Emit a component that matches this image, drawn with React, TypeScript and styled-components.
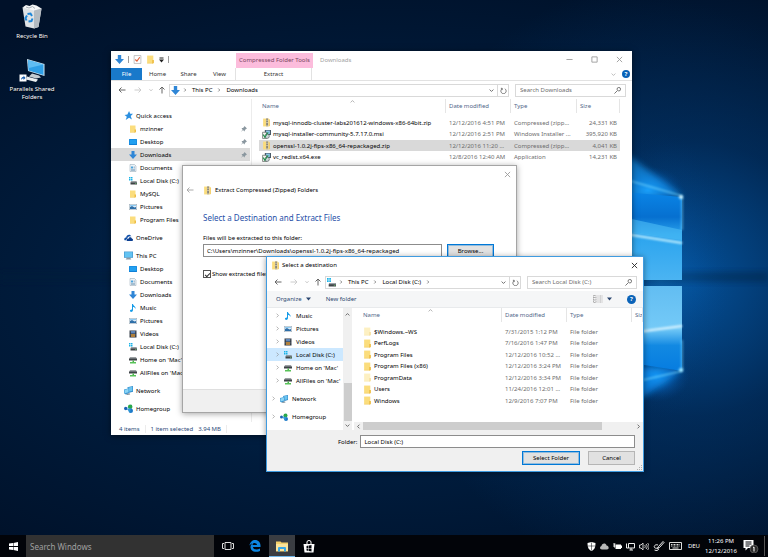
import React from 'react';
import styled, { createGlobalStyle, css } from 'styled-components';

const GlobalStyle = createGlobalStyle`
  *, *::before, *::after { box-sizing: border-box; }
  html, body { margin: 0; padding: 0; background: #00112b; }
  body, button, input, table { font-family: "Noto Sans", "Open Sans", sans-serif; font-size: 6px; line-height: 8px; color: #000; }
  button { border: 0; padding: 0; margin: 0; background: none; text-align: left; }
  svg { display: block; flex: none; }
`;

/* ---------- icons ---------- */

type IconName =
  | 'folder' | 'folderPale' | 'zip' | 'download' | 'desktop' | 'document' | 'disk' | 'picture'
  | 'music' | 'video' | 'netdrive' | 'network' | 'homegroup' | 'onedrive' | 'pc' | 'star' | 'installer' | 'check';

const folderShape = (light: string, dark: string) => (
  <>
    <path d="M2 1h11v14H2z" fill={light} />
    <path d="M11 9l3 0v5l-2 1h-1z" fill={dark} />
    <path d="M2 14h10v1H2z" fill={dark} opacity=".5" />
  </>
);

const drawings: Record<IconName, React.ReactNode> = {
  folder: folderShape('#fbdd7d', '#eebd45'),
  folderPale: folderShape('#fdf0c2', '#f7e0a0'),
  zip: (
    <>
      <path d="M2 1h10v14H2z" fill="#fbdd7d" />
      <path d="M12 1l2 2v11l-2 1z" fill="#f3cb5c" />
      <path d="M7 1h4v14H7z" fill="#c4bea8" />
      <path d="M8 1h2v2H8zM8 5h2v2H8zM8 9h2v4H8z" fill="#6a6860" />
    </>
  ),
  download: <path d="M5 0h6v7h5l-8 9-8-9h5z" fill="#2f86d6" />,
  desktop: (
    <>
      <rect x="0" y="2" width="16" height="12" rx="1" fill="#0f7fd6" />
      <rect x="1" y="3" width="14" height="9" fill="#22a0f0" />
    </>
  ),
  document: (
    <>
      <path d="M2 1h9l3 3v11H2z" fill="#eef4f8" stroke="#8fa2b0" />
      <path d="M4 5h4v4H4z" fill="#4aa3dc" />
      <path d="M9 6h3M9 8h3M4 11h8M4 13h8" stroke="#5b87a8" />
    </>
  ),
  disk: (
    <>
      <path d="M0 0h3v3H0zM4 0h3v3H4zM0 4h3v3H0zM4 4h3v3H4z" fill="#19b3e8" />
      <path d="M4 9h11l1 3v3H3v-3z" fill="#3e4347" />
      <path d="M4 9h11l1 2H3z" fill="#9aa1a6" />
      <path d="M12 13h3" stroke="#7ef07e" />
    </>
  ),
  picture: (
    <>
      <rect x="0.500" y="2.500" width="15" height="11" fill="#dfeefa" stroke="#9aa7b2" />
      <path d="M2 8l4-2 5 3 3-1v4H2z" fill="#2e6fa8" />
      <path d="M2 4h12v2H2z" fill="#8ecbf2" />
    </>
  ),
  music: <path d="M6 0h2c0 4 6 4 5 10-1-3-3-4-5-4v6c0 5-7 5-6 1 .5-2 3-2 4-2z" fill="#149be8" />,
  video: (
    <>
      <rect x="1" y="1" width="14" height="14" fill="#2d3540" />
      <path d="M4 2h8v5H4z" fill="#5f86b8" />
      <path d="M4 8h8v6H4z" fill="#b0803c" />
      <path d="M2 2v12M14 2v12" stroke="#c9d0d8" strokeDasharray="1.500 1.500" />
    </>
  ),
  netdrive: (
    <>
      <path d="M2 3h12l2 3v3H0V6z" fill="#3e4347" />
      <path d="M2 3h12l1 2H1z" fill="#9aa1a6" />
      <path d="M7 9h3v4H7z" fill="#46b848" />
      <path d="M2 12h12v3H2z" fill="#58c258" />
    </>
  ),
  network: (
    <>
      <path d="M6 2l10-2v10l-7 2z" fill="#2a86c8" />
      <path d="M7 3l8-2v8l-6 1z" fill="#6cc4f0" />
      <path d="M0 6l9-2v9l-6 2-3-2z" fill="#3b97d3" />
      <path d="M1 7l7-2v6l-7 2z" fill="#8ad4f5" />
      <path d="M4 14l6-1 1 2-6 1z" fill="#7d8c97" />
    </>
  ),
  homegroup: (
    <>
      <circle cx="3" cy="8" r="3" fill="#1c62b5" />
      <path d="M5 7l9-6v7z" fill="#5ab4e8" />
      <circle cx="11" cy="5" r="4" fill="#2aa84a" />
      <circle cx="12" cy="12" r="4" fill="#1c78c8" />
      <path d="M5 9l6 6 1-8z" fill="#2f9ad6" />
    </>
  ),
  onedrive: (
    <>
      <path d="M1 13c-2-4 2-5 3-5 0-5 7-7 9-2-5-1-7 2-7 4-2 0-2 2-2 3z" fill="#1150a8" />
      <path d="M5 14c-1-3 1-4 3-4 1-4 6-3 6 0 3 0 2 4 1 4z" fill="#0c3f91" />
    </>
  ),
  pc: (
    <>
      <rect x="0" y="1" width="16" height="11" fill="#3d8fc9" />
      <rect x="1" y="2" width="14" height="9" fill="#63c3f2" />
      <path d="M5 12h6l2 3H3z" fill="#8d9aa5" />
    </>
  ),
  star: <path d="M9 0l2 5 5 0-4 4 2 6-5-3-6 4 2-6-4-3 5-1z" fill="#2a8fe0" />,
  installer: (
    <>
      <path d="M5 0h11v9H5z" fill="#4a5a68" />
      <path d="M7 1h7v6H7z" fill="#8cc7ea" />
      <path d="M1 4h7v11H1z" fill="#f2f2ef" stroke="#39473f" />
      <circle cx="9" cy="11" r="4" fill="#cfd8dc" stroke="#3a4a45" />
      <path d="M2 8l3 5 6-9" fill="none" stroke="#1f8f4a" strokeWidth="2" />
    </>
  ),
  check: (
    <>
      <path d="M2 1h12v14H2z" fill="#fff" stroke="#9b9b9b" />
      <path d="M4 8l3 3 5-7" fill="none" stroke="#e0603a" strokeWidth="2" />
    </>
  ),
};

const Icon = ({ name, size = 9 }: { name: IconName; size?: number }) => (
  <svg width={size} height={size} viewBox="0 0 16 16" aria-hidden="true">{drawings[name]}</svg>
);

const glyphs = {
  left: 'M15 8H2M7 3L2 8l5 5',
  right: 'M1 8h13M9 3l5 5-5 5',
  up: 'M8 15V2M3 7l5-5 5 5',
  chevronRight: 'M5 2l6 6-6 6',
  chevronLeft: 'M11 2L5 8l6 6',
  chevronDown: 'M2 5l6 6 6-6',
  chevronUp: 'M2 11l6-6 6 6',
  close: 'M2 2l12 12M14 2L2 14',
  minimize: 'M1 8h14',
  maximize: 'M2 2h12v12H2z',
  refresh: 'M5 3H2M5 3v4M5 4a6 6 0 1 0 6 0',
  search: 'M1 15l6-6M7 5a4 4 0 1 1 8 0a4 4 0 1 1-8 0',
};

const Glyph = ({ name, size = 7, color = '#666', weight = 2 }: { name: keyof typeof glyphs; size?: number; color?: string; weight?: number }) => (
  <svg width={size} height={size} viewBox="0 0 16 16" fill="none" stroke={color} strokeWidth={weight} aria-hidden="true">
    <path d={glyphs[name]} />
  </svg>
);

const Triangle = ({ color = '#333' }: { color?: string }) => (
  <svg width="5" height="4" viewBox="0 0 10 8" aria-hidden="true"><path d="M0 1h10L5 7z" fill={color} /></svg>
);

const Customize = () => (
  <svg width="5" height="6" viewBox="0 0 10 12" aria-hidden="true"><path d="M1 1h8v2H1zM0 5h10l-5 6z" fill="#222" /></svg>
);

const Pin = () => (
  <svg width="6" height="6" viewBox="0 0 12 12" aria-hidden="true">
    <path d="M7 0l5 5-2 1-2 2-1 3-3-3-4 4 3-5-2-3 3 0 2-2z" fill="#8a979f" />
  </svg>
);

/* ---------- desktop ---------- */

const Desktop = styled.main`
  position: relative;
  display: flex;
  flex-direction: column;
  min-height: 100vh;
  overflow: hidden;
  isolation: isolate;
  background:
    radial-gradient(ellipse 40% 55% at 90% 50%, #044f96 0%, rgba(3, 60, 120, 0.500) 45%, rgba(0, 30, 70, 0) 100%),
    radial-gradient(ellipse 80% 60% at 50% 52%, #022f60 0%, rgba(0, 32, 68, 0.700) 55%, rgba(0, 17, 43, 0) 100%),
    #001129;
`;

const WallpaperArt = styled.svg`
  position: absolute;
  inset: 0;
  width: 100%;
  height: 100%;
  z-index: -1;
`;

const Wallpaper = () => (
  <WallpaperArt viewBox="0 0 768 557" preserveAspectRatio="xMidYMid slice" aria-hidden="true">
    <defs>
      <linearGradient id="upper" x1="0" y1="0" x2="0" y2="1">
        <stop offset="0" stopColor="#0a86e8" />
        <stop offset="0.300" stopColor="#0670d0" />
        <stop offset="0.500" stopColor="#2ba4ee" />
        <stop offset="1" stopColor="#4bb4f2" />
      </linearGradient>
      <linearGradient id="lower" x1="0" y1="0" x2="0" y2="1">
        <stop offset="0" stopColor="#62bdf2" />
        <stop offset="0.500" stopColor="#74caf7" />
        <stop offset="0.700" stopColor="#1289e2" />
        <stop offset="1" stopColor="#067ce0" />
      </linearGradient>
      <radialGradient id="halo">
        <stop offset="0" stopColor="#22a8ff" stopOpacity="0.900" />
        <stop offset="0.500" stopColor="#0a6fd0" stopOpacity="0.450" />
        <stop offset="1" stopColor="#04458c" stopOpacity="0" />
      </radialGradient>
      <filter id="soft" x="-50%" y="-50%" width="200%" height="200%"><feGaussianBlur stdDeviation="3" /></filter>
      <filter id="fine" x="-50%" y="-50%" width="200%" height="200%"><feGaussianBlur stdDeviation="1" /></filter>
    </defs>
    <path d="M0 272h768v10H0z" fill="#001a3a" opacity=".4" filter="url(#soft)" />
    <ellipse cx="660" cy="275" rx="70" ry="145" fill="url(#halo)" opacity=".25" />
    <ellipse cx="648" cy="190" rx="36" ry="24" fill="url(#halo)" />
    <ellipse cx="656" cy="376" rx="34" ry="26" fill="url(#halo)" />
    <path d="M600 135L683 196 600 200z" fill="#18a0ff" opacity=".6" filter="url(#soft)" />
    <path d="M600 425L683 370 600 366z" fill="#0f90f5" opacity=".65" filter="url(#soft)" />
    <path d="M600 190L682 197V280H600z" fill="url(#upper)" />
    <path d="M600 286H682V371L600 358z" fill="url(#lower)" />
    <path d="M600 212L682 230V240L600 228z" fill="#4cbcf5" opacity=".6" />
    <path d="M600 230L682 243" stroke="#c8f2ff" strokeWidth="2" filter="url(#fine)" />
    <path d="M600 337L682 326" stroke="#e0f6ff" strokeWidth="2" filter="url(#fine)" />
    <path d="M600 172L682 196M600 390L682 371M682 196V230M682 340V371" stroke="#7ddcff" strokeWidth="1" filter="url(#fine)" />
    <circle cx="681" cy="197" r="2" fill="#d8f7ff" filter="url(#fine)" />
    <circle cx="681" cy="370" r="2" fill="#a8ebff" filter="url(#fine)" />
  </WallpaperArt>
);

const Shortcuts = styled.nav`
  display: flex;
  flex-direction: column;
  gap: 19px;
  width: 64px;
  padding-top: 4px;
  flex: 1;
`;

const Shortcut = styled.button`
  display: flex;
  flex-direction: column;
  align-items: center;
  gap: 3px;
  color: #fff;
  text-align: center;
  text-shadow: 0 1px 1px #000;
`;

const RecycleBin = () => (
  <svg width="22" height="25" viewBox="0 0 44 50" aria-hidden="true">
    <path d="M3 7L41 9 35 46 26 49 9 45z" fill="#dfe3e6" />
    <path d="M26 11L41 9 35 46 26 49z" fill="#b4bbc1" />
    <path d="M3 7l7-5 7 2 6-3 8 2 10 6-15 4z" fill="#f6f7f8" />
    <path d="M10 6l6 2 7-3 5 4" fill="none" stroke="#aab2b8" strokeWidth="2" />
    <path d="M13 20l6-1 3 5M23 29l-2 5-6 1M11 33l-2-5 3-5" fill="none" stroke="#1c86d8" strokeWidth="4" />
  </svg>
);

const SharedFolders = () => (
  <svg width="27" height="23" viewBox="0 0 54 46" aria-hidden="true">
    <path d="M16 0L51 10V34L18 24z" fill="#d3e9f6" />
    <path d="M18 2L49 11V32L19 23z" fill="#2f9fe6" />
    <path d="M18 2L49 11 20 18z" fill="#5fbdf3" />
    <path d="M26 29l14 4 4 4-10 2-14-4z" fill="#c4ccd2" />
    <path d="M16 35l22 6-4 5-20-5z" fill="#eceff1" />
    <path d="M1 31h14v14H1z" fill="#fff" />
    <path d="M4 42c0-5 3-6 5-6v-3l4 5-4 4v-3c-2 0-3 0-5 3z" fill="#1a5fb0" />
  </svg>
);

/* ---------- windows ---------- */

const WindowFrame = styled.section`
  position: absolute;
  display: flex;
  flex-direction: column;
  background: #fff;
  overflow: hidden;
`;

const ExplorerFrame = styled(WindowFrame)`
  inset: 51px 136px 122px 111px;
  box-shadow: 0 1px 6px rgba(0, 0, 0, 0.500);
`;

const WizardFrame = styled(WindowFrame)`
  inset: 165px 251px 144px 182px;
  border: 1px solid #a5a5a5;
  box-shadow: 0 1px 6px rgba(0, 0, 0, 0.350);
`;

const PickerFrame = styled(WindowFrame)`
  inset: 256px 124px 85px 266px;
  border: 1px solid #3f9be0;
  box-shadow: 0 1px 6px rgba(0, 0, 0, 0.400);
`;

const TitleRow = styled.header`
  display: flex;
  align-items: center;
  height: 17px;
`;

const QuickTools = styled.div`
  display: flex;
  align-items: center;
  gap: 4px;
  width: 125px;
  padding-left: 4px;
`;

const ToolDivider = styled.i`
  width: 1px;
  height: 7px;
  background: #9a9a9a;
`;

const ContextTab = styled.div`
  align-self: flex-end;
  width: 77px;
  height: 15px;
  line-height: 15px;
  background: #fcbcdc;
  color: #7a4560;
  text-align: center;
`;

const WindowTitle = styled.h1`
  flex: 1;
  margin: 0;
  padding-left: 7px;
  font-size: 6px;
  font-weight: 400;
  color: #a2a2a2;
`;

const WindowButtons = styled.div`
  display: flex;
  gap: 18px;
  padding-right: 9px;
`;

const Ribbon = styled.nav`
  display: flex;
  align-items: center;
  height: 13px;
  border-bottom: 1px solid #e2e2e2;
`;

const RibbonTab = styled.button<{ $file?: boolean; $context?: boolean }>`
  align-self: stretch;
  width: 31px;
  text-align: center;
  color: #333;
  ${p => p.$file && css`background: #1979ca; color: #fff;`}
  ${p => p.$context && css`width: 77px; border: solid #e2e2e2; border-width: 0 1px;`}
`;

const RibbonEnd = styled.div`
  display: flex;
  align-items: center;
  gap: 6px;
  margin-left: auto;
  padding-right: 2px;
`;

const HelpButton = styled.button<{ $large?: boolean }>`
  width: ${p => (p.$large ? 9 : 8)}px;
  height: ${p => (p.$large ? 9 : 8)}px;
  border-radius: 50%;
  background: #0a63b8;
  color: #fff;
  font-weight: 700;
  text-align: center;
`;

const AddressRow = styled.div`
  display: flex;
  align-items: center;
  height: 18px;
  padding: 0 6px 0 3px;
`;

const NavButton = styled.button<{ $w: number }>`
  display: flex;
  justify-content: center;
  width: ${p => p.$w}px;
`;

const AddressBox = styled.div`
  display: flex;
  align-items: center;
  flex: 1;
  gap: 3px;
  height: 13px;
  padding-left: 1px;
  border: 1px solid #d9d9d9;
`;

const CrumbList = styled.div`
  display: flex;
  align-items: center;
  flex: 1;
  gap: 5px;
`;

const Refresh = styled.button`
  display: flex;
  align-items: center;
  justify-content: center;
  align-self: stretch;
  width: 11px;
  border-left: 1px solid #d9d9d9;
`;

const SearchBox = styled.label<{ $w: number }>`
  display: flex;
  align-items: center;
  width: ${p => p.$w}px;
  height: 13px;
  margin-left: 6px;
  padding: 0 4px;
  border: 1px solid #d9d9d9;
`;

const SearchInput = styled.input`
  flex: 1;
  min-width: 0;
  padding: 0;
  border: 0;
  outline: 0;
  background: none;
  &::placeholder { color: #6d6d6d; opacity: 1; }
`;

const Address = ({ icon, crumbs, trailing, search, searchWidth }: { icon: IconName; crumbs: string[]; trailing?: boolean; search: string; searchWidth: number }) => (
  <AddressRow>
    <NavButton $w={15} aria-label="Back"><Glyph name="left" size={8} /></NavButton>
    <NavButton $w={17} aria-label="Forward"><Glyph name="right" size={8} color="#ccc" /></NavButton>
    <NavButton $w={9} aria-label="Recent"><Glyph name="chevronDown" size={4} color="#888" /></NavButton>
    <NavButton $w={14} aria-label="Up"><Glyph name="up" size={8} /></NavButton>
    <AddressBox>
      <Icon name={icon} />
      <CrumbList>
        {crumbs.map(c => (
          <React.Fragment key={c}>
            <Glyph name="chevronRight" size={4} weight={3} />
            <button>{c}</button>
          </React.Fragment>
        ))}
        {trailing && <Glyph name="chevronRight" size={4} weight={3} />}
      </CrumbList>
      <Glyph name="chevronDown" size={5} weight={3} />
      <Refresh aria-label="Refresh"><Glyph name="refresh" size={7} /></Refresh>
    </AddressBox>
    <SearchBox $w={searchWidth}>
      <SearchInput aria-label={search} placeholder={search} />
      <Glyph name="search" size={7} />
    </SearchBox>
  </AddressRow>
);

const Body = styled.div`
  display: flex;
  flex: 1;
  min-height: 0;
`;

/* ---------- navigation tree ---------- */

const Tree = styled.nav<{ $picker?: boolean }>`
  display: flex;
  flex-direction: column;
  gap: 5px;
  flex: none;
  overflow: hidden;
  ${p => (p.$picker
    ? css`width: 76px; padding-top: 1px;`
    : css`width: 141px; padding: 10px 1px 0 0; border-right: 1px solid #ececec;`)}
`;

const TreeGroup = styled.div`
  display: flex;
  flex-direction: column;
`;

const TreeItem = styled.button<{ $indent: number; $gap: number; $fill?: string }>`
  display: flex;
  align-items: center;
  gap: ${p => p.$gap}px;
  height: 13px;
  padding: 0 3px 0 ${p => p.$indent}px;
  white-space: nowrap;
  background: ${p => p.$fill ?? 'transparent'};
`;

const TreeLabel = styled.span`
  flex: 1;
`;

type Node = { label: string; icon: IconName; pinned?: boolean; selected?: boolean; child?: boolean };

const explorerTree: Node[][] = [
  [
    { label: 'Quick access', icon: 'star' },
    { label: 'mzinner', icon: 'folder', pinned: true, child: true },
    { label: 'Desktop', icon: 'desktop', pinned: true, child: true },
    { label: 'Downloads', icon: 'download', pinned: true, selected: true, child: true },
    { label: 'Documents', icon: 'document', pinned: true, child: true },
    { label: 'Local Disk (C:)', icon: 'disk', child: true },
    { label: 'MySQL', icon: 'folder', child: true },
    { label: 'Pictures', icon: 'picture', child: true },
    { label: 'Program Files', icon: 'folder', child: true },
  ],
  [{ label: 'OneDrive', icon: 'onedrive' }],
  [
    { label: 'This PC', icon: 'pc' },
    { label: 'Desktop', icon: 'desktop', child: true },
    { label: 'Documents', icon: 'document', child: true },
    { label: 'Downloads', icon: 'download', child: true },
    { label: 'Music', icon: 'music', child: true },
    { label: 'Pictures', icon: 'picture', child: true },
    { label: 'Videos', icon: 'video', child: true },
    { label: 'Local Disk (C:)', icon: 'disk', child: true },
    { label: "Home on 'Mac'", icon: 'netdrive', child: true },
    { label: "AllFiles on 'Mac'", icon: 'netdrive', child: true },
  ],
  [{ label: 'Network', icon: 'network' }],
  [{ label: 'Homegroup', icon: 'homegroup' }],
];

const pickerTree: Node[][] = [
  [
    { label: 'Music', icon: 'music', child: true },
    { label: 'Pictures', icon: 'picture', child: true },
    { label: 'Videos', icon: 'video', child: true },
    { label: 'Local Disk (C:)', icon: 'disk', selected: true, child: true },
    { label: "Home on 'Mac'", icon: 'netdrive', child: true },
    { label: "AllFiles on 'Mac'", icon: 'netdrive', child: true },
  ],
  [{ label: 'Network', icon: 'network' }],
  [{ label: 'Homegroup', icon: 'homegroup' }],
];

const NavTree = ({ groups, picker }: { groups: Node[][]; picker?: boolean }) => (
  <Tree $picker={picker}>
    {groups.map((group, i) => (
      <TreeGroup key={i}>
        {group.map(n => (
          <TreeItem
            key={n.label}
            $gap={picker ? 4 : 3}
            $indent={picker ? (n.child ? 8 : 4) : n.child ? 18 : 13}
            $fill={n.selected ? (picker ? '#cce8ff' : '#d9d9d9') : undefined}
          >
            {picker && <Glyph name="chevronRight" size={5} color="#8a8a8a" />}
            <Icon name={n.icon} size={picker || n.child ? 8 : 9} />
            <TreeLabel>{n.label}</TreeLabel>
            {n.pinned && <Pin />}
          </TreeItem>
        ))}
      </TreeGroup>
    ))}
  </Tree>
);

/* ---------- file table ---------- */

const FileTable = styled.table`
  width: 100%;
  table-layout: fixed;
  border-collapse: separate;
  border-spacing: 0;
  white-space: nowrap;
  tbody::before { content: ''; display: block; height: 4px; }
`;

const Col = styled.col<{ $w?: number }>`
  width: ${p => (p.$w ? `${p.$w}px` : 'auto')};
`;

const HeadCell = styled.th`
  position: relative;
  height: 14px;
  padding: 0 3px;
  border-right: 1px solid #e5e5e5;
  color: #53688a;
  font-weight: 400;
  text-align: left;
  overflow: hidden;
`;

const SortMark = styled.span`
  position: absolute;
  top: 0;
  left: 0;
  right: 0;
  display: flex;
  justify-content: center;
`;

const FileRow = styled.tr<{ $selected?: boolean }>`
  height: 11px;
  background: ${p => (p.$selected ? '#d9d9d9' : 'transparent')};
  &:nth-child(even) { height: 12px; }
`;

const Cell = styled.td<{ $right?: boolean }>`
  padding: 0 3px;
  color: #6d6d6d;
  text-align: ${p => (p.$right ? 'right' : 'left')};
  overflow: hidden;
`;

const FileName = styled.span`
  display: flex;
  align-items: center;
  gap: 2px;
  color: #000;
`;

type FileEntry = { name: string; icon: IconName; date: string; type: string; size: string; selected?: boolean };

const downloads: FileEntry[] = [
  { name: 'mysql-innodb-cluster-labs201612-windows-x86-64bit.zip', icon: 'zip', date: '12/12/2016 4:51 PM', type: 'Compressed (zipp...', size: '24,331 KB' },
  { name: 'mysql-installer-community-5.7.17.0.msi', icon: 'installer', date: '12/12/2016 2:51 PM', type: 'Windows Installer ...', size: '395,920 KB' },
  { name: 'openssl-1.0.2j-fips-x86_64-repackaged.zip', icon: 'zip', date: '12/12/2016 11:20 ...', type: 'Compressed (zipp...', size: '4,041 KB', selected: true },
  { name: 'vc_redist.x64.exe', icon: 'installer', date: '12/8/2016 12:40 AM', type: 'Application', size: '14,231 KB' },
];

const folder = (name: string, date: string, icon: IconName = 'folder'): FileEntry => ({ name, date, icon, type: 'File folder', size: '' });

const diskFolders: FileEntry[] = [
  folder('$Windows.~WS', '7/31/2015 1:12 PM', 'folderPale'),
  folder('PerfLogs', '7/16/2016 1:47 PM'),
  folder('Program Files', '12/12/2016 10:52 ...'),
  folder('Program Files (x86)', '12/12/2016 3:24 PM'),
  folder('ProgramData', '12/12/2016 3:34 PM', 'folderPale'),
  folder('Users', '11/24/2016 12:01 ...'),
  folder('Windows', '12/9/2016 7:07 PM'),
];

const Files = ({ rows, widths }: { rows: FileEntry[]; widths: number[] }) => (
  <FileTable>
    <colgroup>
      <Col />
      {widths.map((w, i) => <Col key={i} $w={w} />)}
    </colgroup>
    <thead>
      <tr>
        <HeadCell>Name<SortMark><Glyph name="chevronUp" size={5} color="#888" /></SortMark></HeadCell>
        <HeadCell>Date modified</HeadCell>
        <HeadCell>Type</HeadCell>
        <HeadCell>Size</HeadCell>
      </tr>
    </thead>
    <tbody>
      {rows.map(r => (
        <FileRow key={r.name} $selected={r.selected}>
          <Cell><FileName><Icon name={r.icon} />{r.name}</FileName></Cell>
          <Cell>{r.date}</Cell>
          <Cell>{r.type}</Cell>
          <Cell $right>{r.size}</Cell>
        </FileRow>
      ))}
    </tbody>
  </FileTable>
);

const ExplorerList = styled.div`
  flex: 1;
  min-width: 0;
  padding: 0 12px 0 7px;
`;

const StatusBar = styled.footer`
  display: flex;
  align-items: center;
  gap: 5px;
  height: 13px;
  padding-left: 8px;
  color: #2c4a7a;
`;

const StatusDivider = styled.i`
  width: 1px;
  height: 8px;
  background: #ececec;
`;

/* ---------- extract wizard ---------- */

const WizardClose = styled.button`
  align-self: flex-end;
  margin: 5px 5px 0 0;
`;

const WizardTitle = styled.h2`
  display: flex;
  align-items: center;
  gap: 3px;
  margin: 7px 0 0 3px;
  font-size: 6px;
  line-height: 10px;
  font-weight: 400;
`;

const WizardBack = styled.button`
  width: 14px;
`;

const WizardBody = styled.form`
  display: flex;
  flex-direction: column;
  flex: 1;
  padding: 17px 22px 0 20px;
`;

const WizardHeading = styled.h3`
  margin: 0 0 10px;
  font-size: 8px;
  line-height: 12px;
  font-weight: 400;
  color: #1f4fa8;
`;

const PathRow = styled.div`
  display: flex;
  gap: 5px;
  margin: 2px 0 12px;
`;

const TextField = styled.input`
  flex: 1;
  min-width: 0;
  height: 13px;
  padding: 0 3px;
  border: 1px solid #8c8c8c;
  border-radius: 0;
  outline: 0;
  background: #fff;
`;

const PushButton = styled.button<{ $primary?: boolean; $w: number }>`
  width: ${p => p.$w}px;
  height: 14px;
  background: #e1e1e1;
  border: 1px solid ${p => (p.$primary ? '#0078d7' : '#b5b5b5')};
  ${p => p.$primary && css`box-shadow: inset 0 0 0 1px rgba(0, 120, 215, 0.350);`}
  text-align: center;
`;

const CheckLabel = styled.label`
  display: flex;
  align-items: center;
  gap: 1px;
  white-space: nowrap;
`;

const CheckBox = styled.input`
  appearance: none;
  width: 8px;
  height: 8px;
  margin: 0;
  border: 1px solid #555;
  background: #fff;
  display: grid;
  place-items: center;
  &:checked::before {
    content: '';
    width: 5px;
    height: 3px;
    border: solid #333;
    border-width: 0 0 1px 1px;
    transform: rotate(-45deg);
  }
`;

const WizardFooter = styled.footer`
  height: 23px;
  background: #f0f0f0;
  border-top: 1px solid #dfdfdf;
`;

/* ---------- destination picker ---------- */

const PickerTitle = styled.header`
  display: flex;
  align-items: center;
  gap: 2px;
  height: 16px;
  padding: 0 5px 0 4px;
`;

const PickerName = styled.h2`
  flex: 1;
  margin: 0;
  font-size: 6px;
  font-weight: 400;
`;

const Toolbar = styled.div`
  display: flex;
  align-items: center;
  gap: 15px;
  height: 17px;
  padding: 0 7px 0 9px;
  background: #f5f6f7;
  border-bottom: 1px solid #e8eaec;
`;

const ToolButton = styled.button`
  display: flex;
  align-items: center;
  gap: 4px;
  color: #2b466f;
`;

const ToolSpring = styled.div`
  flex: 1;
`;

const VerticalBar = styled.div`
  display: flex;
  flex-direction: column;
  justify-content: space-between;
  align-items: center;
  width: 9px;
  padding: 4px 0 2px;
  background: #f0f0f0;
`;

const VerticalThumb = styled.div`
  width: 8px;
  height: 38px;
  margin: auto 0 2px;
  background: #cdcdcd;
`;

const PickerPane = styled.div`
  display: flex;
  flex-direction: column;
  flex: 1;
  min-width: 0;
  padding-left: 2px;
`;

const PickerList = styled.div`
  flex: 1;
  padding-left: 6px;
`;

const HorizontalBar = styled.div`
  display: flex;
  align-items: center;
  gap: 2px;
  height: 8px;
  padding: 0 2px;
  background: #f0f0f0;
`;

const HorizontalTrack = styled.div`
  flex: 1;
  height: 8px;
  padding-right: 32px;
`;

const HorizontalThumb = styled.div`
  height: 8px;
  background: #cdcdcd;
`;

const PickerFooter = styled.footer`
  display: flex;
  flex-direction: column;
  gap: 3px;
  padding: 5px 8px 6px;
  background: #f0f0f0;
`;

const FolderRow = styled.label`
  display: flex;
  align-items: center;
  gap: 3px;
  padding-left: 63px;
`;

const ButtonRow = styled.div`
  display: flex;
  justify-content: flex-end;
  gap: 8px;
`;

const Grip = styled.svg`
  position: absolute;
  right: 1px;
  bottom: 1px;
`;

/* ---------- taskbar ---------- */

const Taskbar = styled.footer`
  display: flex;
  align-items: center;
  height: 22px;
  background: #020409;
  color: #fff;
`;

const TaskButton = styled.button<{ $w: number; $active?: boolean }>`
  display: flex;
  align-items: center;
  justify-content: center;
  align-self: stretch;
  width: ${p => p.$w}px;
  ${p => p.$active && css`background: #3a3d42; box-shadow: inset 0 -1px #6fb5e8;`}
`;

const TaskSearch = styled.input`
  width: 188px;
  height: 22px;
  padding: 0 4px;
  border: 0;
  outline: 0;
  background: #323232;
  color: #fff;
  font-size: 8px;
  &::placeholder { color: #a0a0a0; opacity: 1; }
`;

const Tray = styled.div`
  display: flex;
  align-items: center;
  gap: 4px;
  margin-left: auto;
`;

const Language = styled.button`
  margin-left: 2px;
  color: #fff;
`;

const Clock = styled.time`
  display: flex;
  flex-direction: column;
  width: 34px;
  line-height: 10px;
  text-align: center;
`;

const ShowDesktop = styled.button`
  align-self: stretch;
  width: 4px;
  border-left: 1px solid #555;
`;

const TrayIcons = () => (
  <>
    <svg width="9" height="9" viewBox="0 0 18 18"><path d="M9 0l8 2c0 9-2 13-8 16C3 15 1 11 1 2z" fill="#fff" /><path d="M9 1v16M1 8h16" stroke="#02040a" strokeWidth="1" /></svg>
    <svg width="9" height="9" viewBox="0 0 18 18"><path d="M4 15c-5 0-5-6-1-7 0-6 9-7 10-1 5 0 6 8 1 8z" fill="#b8b8b8" /></svg>
    <svg width="9" height="9" viewBox="0 0 18 18"><path d="M5 5h11v2h2v5h-2v2H5z" fill="#fff" /><path d="M0 4h5M0 8h5M3 3v8" stroke="#ddd" strokeWidth="2" /></svg>
    <svg width="9" height="9" viewBox="0 0 18 18" fill="none" stroke="#eee" strokeWidth="2"><path d="M5 3h12v9H5zM10 12v4M7 16h7M1 3v9h4" /></svg>
    <svg width="10" height="9" viewBox="0 0 20 18" fill="none" stroke="#ccc" strokeWidth="2"><path d="M1 6h3l4-4v14l-4-4H1zM11 6c2 2 2 4 0 6M14 4c3 3 3 7 0 10M17 2c4 4 4 10 0 14" /></svg>
    <svg width="12" height="10" viewBox="0 0 24 20" fill="none" stroke="#eee" strokeWidth="2"><path d="M11 11l9-10 2 2-9 10-4 1zM10 8c-5-2-9 2-7 5s8 0 8 3-4 4-8 2" /></svg>
    <svg width="13" height="8" viewBox="0 0 26 16" fill="none" stroke="#ddd" strokeWidth="2"><path d="M1 1h24v14H1z" /><path d="M4 5h18M4 8h18" strokeDasharray="2 1" /><path d="M7 12h12" /></svg>
  </>
);

export default function App() {
  return (
    <>
      <GlobalStyle />
      <Desktop>
        <Wallpaper />
        <Shortcuts>
          <Shortcut><RecycleBin />Recycle Bin</Shortcut>
          <Shortcut><SharedFolders />Parallels Shared<br />Folders</Shortcut>
        </Shortcuts>

        <ExplorerFrame>
          <TitleRow>
            <QuickTools>
              <Icon name="download" />
              <ToolDivider />
              <Icon name="check" />
              <Icon name="folder" />
              <Customize />
              <ToolDivider />
            </QuickTools>
            <ContextTab>Compressed Folder Tools</ContextTab>
            <WindowTitle>Downloads</WindowTitle>
            <WindowButtons>
              <button aria-label="Minimize"><Glyph name="minimize" color="#999" /></button>
              <button aria-label="Maximize"><Glyph name="maximize" color="#999" /></button>
              <button aria-label="Close"><Glyph name="close" color="#999" /></button>
            </WindowButtons>
          </TitleRow>
          <Ribbon>
            <RibbonTab $file>File</RibbonTab>
            <RibbonTab>Home</RibbonTab>
            <RibbonTab>Share</RibbonTab>
            <RibbonTab>View</RibbonTab>
            <RibbonTab $context>Extract</RibbonTab>
            <RibbonEnd>
              <Glyph name="chevronDown" size={5} color="#999" />
              <HelpButton aria-label="Help">?</HelpButton>
            </RibbonEnd>
          </Ribbon>
          <Address icon="download" crumbs={['This PC', 'Downloads']} search="Search Downloads" searchWidth={111} />
          <Body>
            <NavTree groups={explorerTree} />
            <ExplorerList><Files rows={downloads} widths={[65, 66, 43]} /></ExplorerList>
          </Body>
          <StatusBar>
            <span>4 items</span>
            <StatusDivider />
            <span>1 item selected</span>
            <span>3.94 MB</span>
            <StatusDivider />
          </StatusBar>
        </ExplorerFrame>

        <WizardFrame>
          <WizardClose aria-label="Close"><Glyph name="close" color="#999" /></WizardClose>
          <WizardTitle>
            <WizardBack aria-label="Back"><Glyph name="left" size={8} color="#aaa" /></WizardBack>
            <Icon name="zip" />
            Extract Compressed (Zipped) Folders
          </WizardTitle>
          <WizardBody>
            <WizardHeading>Select a Destination and Extract Files</WizardHeading>
            <label htmlFor="target">Files will be extracted to this folder:</label>
            <PathRow>
              <TextField id="target" defaultValue="C:\Users\mzinner\Downloads\openssl-1.0.2j-fips-x86_64-repackaged" />
              <PushButton type="button" $primary $w={47}>Browse...</PushButton>
            </PathRow>
            <CheckLabel><CheckBox type="checkbox" defaultChecked />Show extracted files when complete</CheckLabel>
          </WizardBody>
          <WizardFooter />
        </WizardFrame>

        <PickerFrame>
          <PickerTitle>
            <Icon name="zip" />
            <PickerName>Select a destination</PickerName>
            <button aria-label="Close"><Glyph name="close" color="#222" /></button>
          </PickerTitle>
          <Address icon="disk" crumbs={['This PC', 'Local Disk (C:)']} trailing search="Search Local Disk (C:)" searchWidth={110} />
          <Toolbar>
            <ToolButton>Organize<Triangle color="#2b466f" /></ToolButton>
            <ToolButton>New folder</ToolButton>
            <ToolSpring />
            <ToolButton aria-label="View">
              <svg width="10" height="8" viewBox="0 0 20 16" fill="none" stroke="#999" strokeWidth="1.500">
                <path d="M1 1h5v14H1zM1 5h5M1 10h5M9 2h2M13 2h6M9 6h2M13 6h6M9 10h2M13 10h6M9 14h2M13 14h6" strokeDasharray="3 1" />
              </svg>
              <Triangle color="#2b466f" />
            </ToolButton>
            <HelpButton $large aria-label="Help">?</HelpButton>
          </Toolbar>
          <Body>
            <NavTree groups={pickerTree} picker />
            <VerticalBar>
              <Glyph name="chevronUp" size={5} weight={3} />
              <VerticalThumb />
              <Glyph name="chevronDown" size={5} weight={3} />
            </VerticalBar>
            <PickerPane>
              <PickerList><Files rows={diskFolders} widths={[65, 65, 11]} /></PickerList>
              <HorizontalBar>
                <Glyph name="chevronLeft" size={5} weight={3} />
                <HorizontalTrack><HorizontalThumb /></HorizontalTrack>
                <Glyph name="chevronRight" size={5} weight={3} />
              </HorizontalBar>
            </PickerPane>
          </Body>
          <PickerFooter>
            <FolderRow>Folder:<TextField defaultValue="Local Disk (C:)" /></FolderRow>
            <ButtonRow>
              <PushButton $primary $w={58}>Select Folder</PushButton>
              <PushButton $w={47}>Cancel</PushButton>
            </ButtonRow>
          </PickerFooter>
          <Grip width="5" height="5" viewBox="0 0 5 5" aria-hidden="true">
            <path d="M4 0h1v1H4zM2 2h1v1H2zM4 2h1v1H4zM0 4h1v1H0zM2 4h1v1H2zM4 4h1v1H4z" fill="#b0b0b0" />
          </Grip>
        </PickerFrame>

        <Taskbar>
          <TaskButton $w={26} aria-label="Start">
            <svg width="9" height="9" viewBox="0 0 18 18"><path d="M0 3l8-1v6H0zM9 2l9-2v8H9zM0 10h8v6l-8-1zM9 10h9v8l-9-2z" fill="#fff" /></svg>
          </TaskButton>
          <TaskSearch aria-label="Search Windows" placeholder="Search Windows" />
          <TaskButton $w={27} aria-label="Task view">
            <svg width="12" height="8" viewBox="0 0 24 16" fill="none" stroke="#ddd" strokeWidth="2"><path d="M6 1h12v14H6zM4 3H1v10h3M20 3h3v10h-3" /></svg>
          </TaskButton>
          <TaskButton $w={28} aria-label="Edge">
            <svg width="12" height="12" viewBox="0 0 24 24"><path d="M1 11C2 4 7 0 12 0c7 0 11 5 11 11v3H8c0 5 8 7 14 3v5c-9 4-19 1-19-8 0-4 3-7 6-8-1 1-2 3-2 4h9c0-5-9-6-15 1z" fill="#0c86e2" /></svg>
          </TaskButton>
          <TaskButton $w={26} $active aria-label="File Explorer">
            <svg width="12" height="11" viewBox="0 0 24 22"><path d="M0 1h9l2 2h13v18H0z" fill="#f3cf6a" /><path d="M0 6h24v14H0z" fill="#fbe49a" /><path d="M4 21v-7q0-2 2-2h12q2 0 2 2v7h-4v-5H8v5z" fill="#3aa8e6" /></svg>
          </TaskButton>
          <TaskButton $w={27} aria-label="Store">
            <svg width="12" height="13" viewBox="0 0 24 26"><path d="M8 8V4q0-3 4-3t4 3v4" fill="none" stroke="#fff" strokeWidth="2" /><path d="M1 8h22l-2 17H3z" fill="#fff" /><path d="M7 12l4-1v5H7zM12 11l5-1v6h-5zM7 17h4v5l-4-1zM12 17h5v6l-5-1z" fill="#02040a" /></svg>
          </TaskButton>
          <Tray>
            <TrayIcons />
            <Language>DEU</Language>
            <Clock><span>11:26 PM</span><span>12/12/2016</span></Clock>
            <svg width="18" height="14" viewBox="0 0 36 28">
              <path d="M3 2h20v16H12l-5 5v-5H3z" fill="#fff" />
              <path d="M7 6h12M7 10h12M7 14h8" stroke="#02040a" strokeWidth="2" />
              <circle cx="24" cy="20" r="8" fill="#2b2b2b" stroke="#888" />
              <path d="M22 17l2-1v9" fill="none" stroke="#fff" strokeWidth="2" />
            </svg>
            <ShowDesktop aria-label="Show desktop" />
          </Tray>
        </Taskbar>
      </Desktop>
    </>
  );
}
